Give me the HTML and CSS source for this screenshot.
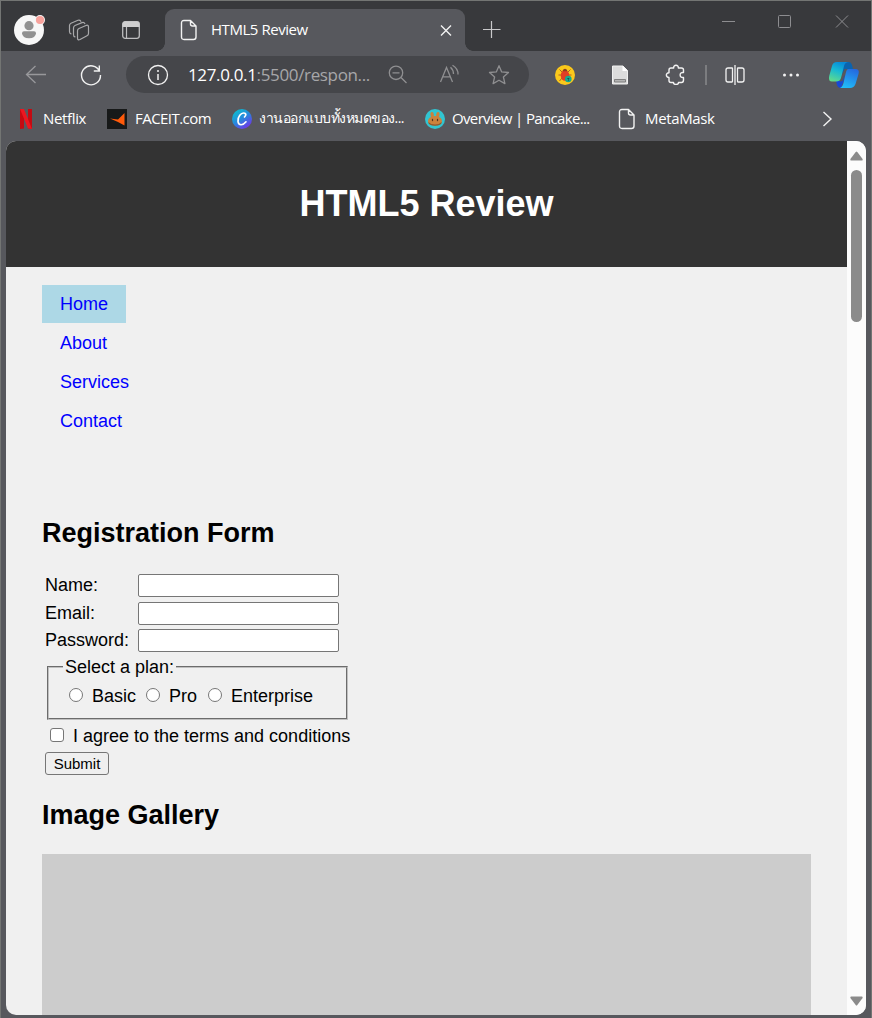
FILE: index.html
```html
<!DOCTYPE html>
<html lang="en">
<head>
<meta charset="utf-8">
<title>HTML5 Review</title>
<link rel="stylesheet" href="styles.css">
</head>
<body>
<div class="window">
  <div class="tabstrip">
    <svg class="avatar" width="32" height="32" viewBox="0 0 32 32"><circle cx="15" cy="16" r="15" fill="#f7f7f7"/><circle cx="15" cy="11.7" r="4.6" fill="#919191"/><path d="M8 19.2Q8 17.2 10 17.2H20Q22 17.2 22 19.2Q21.500 24.300 15 24.300Q8.500 24.300 8 19.200Z" fill="#919191"/><circle cx="26" cy="6" r="5" fill="#f7f7f7"/><circle cx="26" cy="6" r="4.100" fill="#f8a29c"/></svg>
    <svg class="workspaces" width="24" height="24" viewBox="0 0 24 24" fill="none" stroke="#a9a9ab" stroke-width="1.200" stroke-linejoin="round" stroke-linecap="round"><path d="M12 10.500 19.500 7.300Q21.500 6.800 21.500 9V15.500Q21.500 17 20 17.700L13 21.500Q10.500 22.700 10.500 20V12.700Q10.500 11.200 12 10.500Z"/><path d="M17.800 5.600Q17 3.800 15 4.600L8 7.500Q6.500 8.200 6.500 10V16.500Q6.500 18.700 8 18.800"/><path d="M13.800 3.300Q12.800 1.700 11 2.300L4 5.200Q2.500 6 2.500 7.500V13.500Q2.500 15.500 4 15.800"/></svg>
    <svg class="vertical-tabs" width="24" height="24" viewBox="0 0 24 24"><rect x="3.700" y="3.700" width="16.600" height="16.600" rx="2.500" fill="none" stroke="#bdbdbf" stroke-width="1.300"/><path d="M3.500 9V6Q3.500 3.500 6 3.500H18Q20.500 3.500 20.500 6V9Z" fill="#cececf"/><path d="M7.500 9V20" stroke="#bdbdbf" stroke-width="1.200"/></svg>
    <div class="tab">
      <svg width="18" height="22" viewBox="0 0 18 22" fill="none" stroke="#f2f2f2" stroke-width="1.400" stroke-linejoin="round"><path d="M4 1.500H10.500L16 7V18Q16 20.500 13.500 20.500H4Q1.500 20.500 1.500 18V4Q1.500 1.500 4 1.500ZM10.500 1.500V5Q10.500 7 12.500 7H16"/></svg>
      <span class="tab-title">HTML5 Review</span>
      <svg class="tab-close" width="14" height="14" viewBox="0 0 14 14" stroke="#f2f2f2" stroke-width="1.400"><path d="M2 2.500 12 12.500M12 2.500 2 12.500"/></svg>
    </div>
    <svg class="new-tab" width="24" height="24" viewBox="0 0 24 24" stroke="#c9c9cb" stroke-width="1.200"><path d="M3 11.500H20.500M11.500 3V20"/></svg>
    <div class="controls">
      <svg width="20" height="20" viewBox="0 0 20 20" stroke="#8d8d90"><path d="M4 10.500H17"/></svg>
      <svg width="20" height="20" viewBox="0 0 20 20" stroke="#8d8d90" fill="none"><rect x="3.500" y="4.500" width="12" height="12" rx="1"/></svg>
      <svg width="20" height="20" viewBox="0 0 20 20" stroke="#8d8d90"><path d="M4 4.500 16 16.500M16 4.500 4 16.500"/></svg>
    </div>
  </div>

  <div class="toolbar">
    <svg class="back" width="24" height="24" viewBox="0 0 24 24" fill="none" stroke="#98989b" stroke-width="1.300"><path d="M22 11.500H2.500M11.500 3 2.500 11.500 11.500 20"/></svg>
    <svg class="reload" width="24" height="24" viewBox="0 0 24 24" fill="none" stroke="#f2f2f2" stroke-width="1.400"><path d="M20.700 8.500A9.500 9.500 0 1 0 21.500 12M20.300 2.500V8H14.800"/></svg>
    <div class="address">
      <svg class="info" width="22" height="22" viewBox="0 0 22 22" fill="none" stroke="#f2f2f2" stroke-width="1.300"><circle cx="11" cy="11" r="9.500"/><path d="M11 10V16" stroke-width="1.500"/><circle cx="11" cy="7" r="1" fill="#f2f2f2" stroke="none"/></svg>
      <span class="url"><b>127.0.0.1</b>:5500/respon...</span>
      <svg class="zoom-out" width="22" height="22" viewBox="0 0 22 22" fill="none" stroke="#8f8f91" stroke-width="1.300"><circle cx="9" cy="8.800" r="6.700"/><path d="M5.500 8.800H12.500M14 13.500 19.500 19"/></svg>
      <svg class="read" width="24" height="22" viewBox="0 0 24 22" fill="none" stroke="#8f8f91" stroke-width="1.300"><path d="M3.500 18 9.500 3.500 15.500 18M5.700 12.800H13.300M13.500 3.200Q16.500 6 16.500 10M15.500 1.200Q21.300 4.500 21 10.500"/></svg>
      <svg class="star" width="22" height="22" viewBox="0 0 22 22" fill="none" stroke="#8f8f91" stroke-width="1.300" stroke-linejoin="round"><path d="M11 1.700 13.700 7.900 20.500 8.500 15.400 13 16.900 19.600 11 16.200 5.100 19.600 6.600 13 1.500 8.500 8.300 7.900Z"/></svg>
    </div>
    <svg class="bug" width="20" height="20" viewBox="0 0 20 20"><circle cx="10" cy="10" r="10" fill="#fbc91b"/><path d="M7 7 4.500 4.500M13 7 15.500 4.500M6 10H3.500M14 10H16.500M7 13 4.500 16M13 13 15 16" stroke="#a0502a" stroke-width=".9"/><ellipse cx="10" cy="10.500" rx="4.300" ry="5.200" fill="#df3f25"/><path d="M7.300 6.200Q10 1.500 12.700 6.200Z" fill="#8b3c20"/><circle cx="13.300" cy="14" r="3.300" fill="#13a88d"/><path d="M12 13H14.600L13.600 14.300V16H13V14.300Z" fill="#174b53"/></svg>
    <svg class="reader" width="18" height="20" viewBox="0 0 18 20"><path d="M1.500 1H12L16.500 5.500V19H1.500Z" fill="#dcdcdc" stroke="#f0f0f0"/><path d="M11.500 1V6H16.500Z" fill="#fff"/><path d="M3.500 14.500H14.500V17H3.500Z" fill="#b5b5b5" stroke="#777" stroke-width=".9"/></svg>
    <svg class="puzzle" width="22" height="22" viewBox="0 0 22 22" fill="none" stroke="#f2f2f2" stroke-width="1.400" stroke-linejoin="round"><path d="M6 4H8.700C8 .3 14 .3 13.300 4H16.500Q18.500 4 18.500 6V8.500C14 7.700 14 14.300 18.500 13.500V16Q18.500 18.500 16.500 18.500H13.500C13.500 21 8.500 21 8.500 18.500H6Q4 18.500 4 16.500V13.500C.5 13.500 .5 8.700 4 8.700V6Q4 4 6 4Z"/></svg>
    <span class="divider"></span>
    <svg class="split" width="22" height="22" viewBox="0 0 22 22" fill="none" stroke="#f2f2f2" stroke-width="1.300"><path d="M8 4H4Q2 4 2 6V16Q2 18 4 18H8M14 4H18Q20 4 20 6V16Q20 18 18 18H14M11 1V21M8 4Q8.500 4 8.500 4.500V17.500Q8.500 18 8 18M14 4Q13.500 4 13.500 4.500V17.500Q13.500 18 14 18"/></svg>
    <svg class="more" width="20" height="6" viewBox="0 0 20 6" fill="#f2f2f2"><circle cx="3.500" cy="3" r="1.500"/><circle cx="10" cy="3" r="1.500"/><circle cx="16.500" cy="3" r="1.500"/></svg>
    <svg class="copilot" width="32" height="28" viewBox="0 0 32 28">
      <defs>
        <linearGradient id="cp1" x1=".6" y1="0" x2=".2" y2="1"><stop offset="0" stop-color="#0789d8"/><stop offset=".45" stop-color="#18b9d2"/><stop offset="1" stop-color="#62db8b"/></linearGradient>
        <linearGradient id="cp2" x1=".7" y1="0" x2=".3" y2="1"><stop offset="0" stop-color="#2569df"/><stop offset="1" stop-color="#20bdf9"/></linearGradient>
      </defs>
      <path d="M17 1H21Q23 1 24 4L25 8H17L10 20H6Q9 20 10 17L14 4Q15 1 17 1Z" fill="#0b63ae"/>
      <path d="M8 20H13L17 14 15 22 13 27Q10 27 9 24Z" fill="#1749d5"/>
      <path d="M9 1H21Q17 1 16 5L13 17Q12 20.500 8 20.500H4Q0 20.500 1.200 15L4 5Q5 1 9 1Z" fill="url(#cp1)"/>
      <path d="M20 8H27Q32 8 30.500 13L27.500 23Q26 27 22 27H12Q14.500 26 15.500 22L18 11Q18.800 8 20 8Z" fill="url(#cp2)"/>
      <path d="M16.500 8H18.500Q17.700 9 17.300 11L15 19Q14.500 20.500 12 20.500Q13 19.500 13.500 17Z" fill="#57585d"/>
    </svg>
  </div>

  <div class="bookmarks">
    <div class="bookmark netflix"><svg width="12" height="20" viewBox="0 0 12 20"><path d="M0 0H4V19.500L0 20ZM8 0H12V20L8 19.500Z" fill="#c40a12"/><path d="M0 0H4L12 20 8 19.500Z" fill="#ed1620"/></svg><span>Netflix</span></div>
    <div class="bookmark faceit"><svg width="20" height="20" viewBox="0 0 20 20"><rect width="20" height="20" fill="#171919"/><path d="M3 9.500 11 10.500 17.500 4V16.500L11 13Z" fill="#ff5a0a"/></svg><span>FACEIT.com</span></div>
    <div class="bookmark canva"><svg width="20" height="20" viewBox="0 0 20 20"><defs><linearGradient id="cv" x1=".1" y1="0" x2=".8" y2="1"><stop offset="0" stop-color="#08c6cb"/><stop offset=".5" stop-color="#2689dd"/><stop offset="1" stop-color="#782ce9"/></linearGradient></defs><circle cx="10" cy="10" r="10" fill="url(#cv)"/><path d="M12.500 8Q15 5.500 12.800 4.200C9 3 5.500 8 6 12.500C6.500 17 11 16.500 14 12.800" fill="none" stroke="#fff" stroke-width="1.700" stroke-linecap="round"/></svg><span lang="th">งานออกแบบทั้งหมดของ...</span></div>
    <div class="bookmark pancake"><svg width="20" height="20" viewBox="0 0 20 20"><circle cx="10" cy="10" r="10" fill="#32c5d1"/><path d="M6 8Q4.500 3 7 3Q9 3 8.800 7H11.200Q11 3 13 3Q15.500 3 14 8Q17 9 17 12.500Q16.500 16.500 10 16.500Q3.500 16.500 3 12.500Q3 9 6 8Z" fill="#cb823d"/><path d="M3.300 13Q6 15.500 10 15.500T16.700 13Q16.500 16.800 10 16.800T3.300 13Z" fill="#8f5a30"/><ellipse cx="7.500" cy="11" rx=".7" ry="1.200" fill="#55351f"/><ellipse cx="12.500" cy="11" rx=".7" ry="1.200" fill="#55351f"/></svg><span>Overview | Pancake...</span></div>
    <div class="bookmark metamask"><svg width="18" height="22" viewBox="0 0 18 22" fill="none" stroke="#f2f2f2" stroke-width="1.400" stroke-linejoin="round"><path d="M4 1.500H10.500L16 7V18Q16 20.500 13.500 20.500H4Q1.500 20.500 1.500 18V4Q1.500 1.500 4 1.500ZM10.500 1.500V5Q10.500 7 12.500 7H16"/></svg><span>MetaMask</span></div>
    <svg class="overflow" width="12" height="18" viewBox="0 0 12 18" fill="none" stroke="#f2f2f2" stroke-width="1.400"><path d="M1.500 2 9 9 1.500 16"/></svg>
  </div>

  <div class="viewport">
    <div class="page">
      <header class="page-header"><h1>HTML5 Review</h1></header>
      <nav><ul class="menu">
        <li><a class="active">Home</a></li>
        <li><a>About</a></li>
        <li><a>Services</a></li>
        <li><a>Contact</a></li>
      </ul></nav>
      <main>
        <h2>Registration Form</h2>
        <form class="form">
          <div class="field"><label for="name">Name:</label><input class="text" id="name" type="text"></div>
          <div class="field"><label for="email">Email:</label><input class="text" id="email" type="email"></div>
          <div class="field"><label for="password">Password:</label><input class="text" id="password" type="password"></div>
          <fieldset>
            <legend>Select a plan:</legend>
            <div class="plans">
              <label class="basic"><input class="radio" type="radio" name="plan">Basic</label>
              <label class="pro"><input class="radio" type="radio" name="plan">Pro</label>
              <label class="enterprise"><input class="radio" type="radio" name="plan">Enterprise</label>
            </div>
          </fieldset>
          <label class="agree"><input class="check" type="checkbox">I agree to the terms and conditions</label>
          <button class="submit" type="button">Submit</button>
        </form>
        <h2 class="gallery-title">Image Gallery</h2>
        <div class="gallery"></div>
      </main>
    </div>
    <div class="scrollbar">
      <svg width="13" height="10" viewBox="0 0 13 10"><path d="M5.700 1Q6.500 0 7.300 1L12.600 8Q13 9.500 12 9.500H1Q0 9.500 .4 8Z" fill="#8b8b8b"/></svg>
      <div class="thumb"></div>
      <svg class="down" width="13" height="10" viewBox="0 0 13 10"><path d="M5.700 9Q6.500 10 7.300 9L12.600 2Q13 .5 12 .5H1Q0 .5 .4 2Z" fill="#8b8b8b"/></svg>
    </div>
  </div>
</div>
</body>
</html>
```
FILE: styles.css
```css
* { box-sizing: border-box; }
body { margin: 0; font-family: "Liberation Sans", Arial, sans-serif; }
svg { display: block; flex: none; }
.window {
  display: flex; flex-direction: column;
  width: 872px; height: 1018px; overflow: hidden;
  background: #57585d;
  border: 1px solid #737573; border-bottom: 0;
  font-family: "Open Sans", "Noto Sans", sans-serif;
}
.tabstrip { display: flex; flex: none; height: 50px; padding-left: 13px; background: #38393c; }
.avatar { margin-top: 13px; }
.workspaces { margin: 17px 0 0 21px; }
.vertical-tabs { margin: 17px 0 0 28px; }
.tab {
  position: relative; display: flex; align-items: center;
  width: 300px; height: 42px; margin: 8px 0 0 22px; padding: 0 12px 0 15px;
  background: #57585d; border-radius: 9px 9px 0 0;
}
.tab::before, .tab::after { content: ""; position: absolute; bottom: 0; width: 8px; height: 8px; }
.tab::before { right: 100%; background: radial-gradient(circle at 0 0, transparent 7.5px, #57585d 8px); }
.tab::after { left: 100%; background: radial-gradient(circle at 100% 0, transparent 7.5px, #57585d 8px); }
.tab-title { margin-left: 13px; padding-bottom: 2px; color: #fff; font-size: 15px; letter-spacing: -0.45px; white-space: nowrap; }
.tab-close { margin-left: auto; }
.new-tab { margin: 17px 0 0 15px; }
.controls { display: flex; gap: 37px; margin: 10px 19px 0 auto; }

.toolbar { display: flex; flex: none; align-items: center; height: 47px; }
.back { margin-left: 23px; }
.reload { margin-left: 31px; }
.address { display: flex; align-items: center; width: 403px; height: 37px; margin-left: 23px; padding-left: 21px; border-radius: 19px; background: #45464a; }
.url { width: 190px; margin-left: 19px; color: #a7a7a9; font-size: 17px; letter-spacing: -0.35px; white-space: nowrap; }
.url b { color: #fff; font-weight: 400; }
.zoom-out { margin-left: 9px; }
.read { margin-left: 28px; }
.star { margin-left: 27px; }
.bug { margin-left: 26px; }
.reader { margin-left: 36px; }
.puzzle { margin-left: 36px; }
.divider { width: 2px; height: 20px; margin-left: 18px; background: #7c7d80; }
.split { margin-left: 17px; }
.more { margin-left: 35px; }
.copilot { margin-left: 27px; }

.bookmarks { display: flex; flex: none; align-items: center; height: 43px; padding: 0 0 2px 19px; color: #fff; font-size: 15px; letter-spacing: -0.35px; }
.bookmark { display: flex; align-items: center; flex: none; white-space: nowrap; }
.bookmark span { margin-left: 7px; padding-bottom: 1px; }
.netflix { width: 87px; }
.netflix span { margin-left: 11px; }
.faceit { width: 125px; }
.faceit span { margin-left: 8px; letter-spacing: -0.55px; }
.canva { width: 193px; }
.canva span { font-size: 14px; letter-spacing: -0.5px; }
.pancake { width: 193px; }
.pancake span { letter-spacing: -0.65px; }
.metamask { width: 204px; }
.metamask span { margin-left: 9px; }

.viewport { display: flex; flex: none; width: 860px; height: 874px; margin-left: 5px; border-radius: 10px; overflow: hidden; background: #f0f0f0; }
.page { width: 841px; overflow: hidden; font-family: "Liberation Sans", Arial, sans-serif; font-size: 18px; line-height: 20px; color: #000; }
.page-header { display: flex; align-items: center; justify-content: center; height: 126px; padding-bottom: 1px; background: #333; color: #fff; }
h1 { margin: 0; font-size: 36px; line-height: 41px; }
.menu { display: flex; flex-direction: column; align-items: flex-start; gap: 1px; margin: 18px 36px 0; padding: 0; list-style: none; }
.menu a { display: block; height: 38px; padding: 9px 18px; color: #00f; }
.menu .active { background: #add8e6; }
main { padding: 78px 36px 0; }
h2 { margin: 0; font-size: 27px; line-height: 31px; }
.form { display: flex; flex-direction: column; align-items: flex-start; padding: 25px 0 0 3px; height: 227px; }
.field { display: grid; grid-template-columns: 93px 201px; height: 23px; margin-bottom: 5px; }
.field:nth-child(2) { margin-bottom: 4px; }
.field label { line-height: 23px; }
.text { width: 201px; height: 23px; margin: 0; padding: 1px 2px; border: 1px solid #767676; border-radius: 2px; background: #fff; }
fieldset { width: 301px; height: 63px; margin: 0 0 0 2px; padding: 0 16px; border: 2px groove #c0c0c0; }
legend { margin-left: -2px; padding: 0 2px; line-height: 20px; }
.plans { display: flex; padding: 9px 0 0 4px; }
.plans label { display: flex; align-items: center; white-space: nowrap; }
.radio, .check { appearance: none; flex: none; width: 14px; height: 14px; margin: 0 9px 2px 0; border: 1px solid #767676; background: #fff; }
.radio { border-radius: 50%; }
.check { border-radius: 3px; }
.basic { width: 77px; }
.pro { width: 62px; }
.agree { display: flex; align-items: center; margin: 5px 0 0 5px; height: 22px; white-space: nowrap; }
.submit { flex: none; width: 64px; height: 23px; margin-top: 5px; padding: 0; border: 1px solid #767676; border-radius: 3px; background: #efefef; color: #000; font: 15px "Liberation Sans", Arial, sans-serif; }
.gallery-title { margin-top: 24px; }
.gallery { height: 200px; margin-top: 23px; background: #ccc; }
.scrollbar { display: flex; flex-direction: column; align-items: center; width: 19px; padding: 10px 0 9px; background: #fcfcfc; }
.thumb { width: 11px; height: 152px; margin-top: 9px; border-radius: 6px; background: #8b8b8b; }
.down { margin-top: auto; }
```
